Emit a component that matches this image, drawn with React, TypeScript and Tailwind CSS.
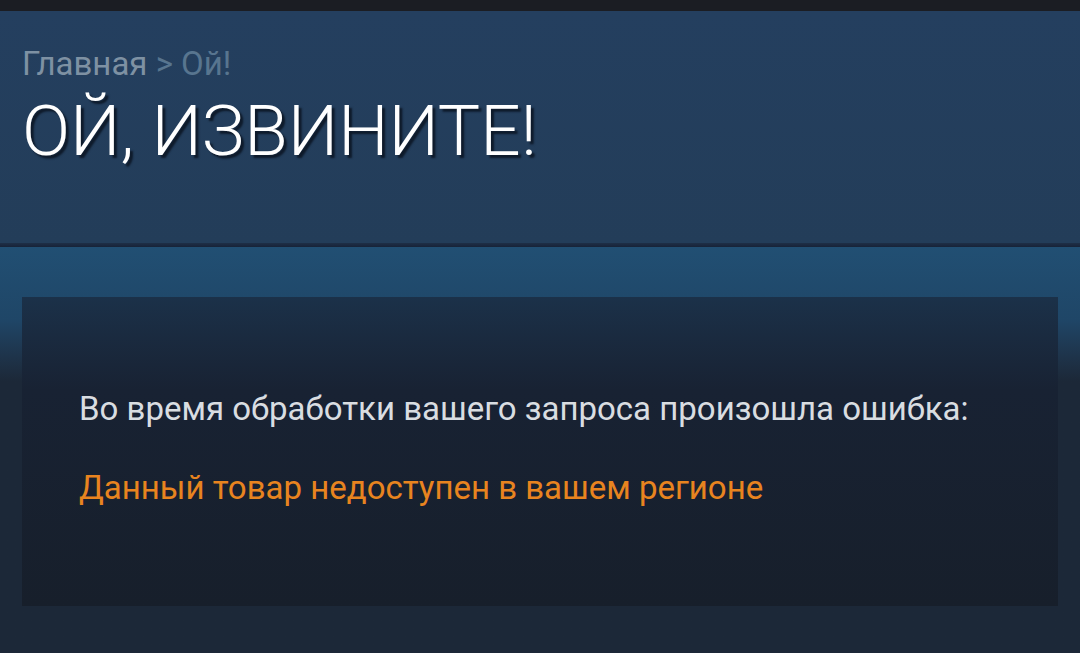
export default function App() {
  const font = { fontFamily: 'Roboto, "Noto Sans", sans-serif' };
  return (
    <div className="w-[1080px] h-[653px] overflow-hidden bg-[#1c2638]" style={font}>
      <div className="h-[11px] bg-[#1b1d23]" />

      {/* Header */}
      <div className="h-[232px] bg-gradient-to-b from-[#243f5f] to-[#233d59] px-[22px] pt-[31px]">
        <div className="text-[33px] leading-[44px] text-[#7e91a3]">
          Главная <span className="text-[#58758f]">&gt; Ой!</span>
        </div>
        <h1 className="mt-[5px] text-[71px] leading-[80px] font-light text-white [text-shadow:3px_3px_2px_#0e1a2a]">
          ОЙ, ИЗВИНИТЕ!
        </h1>
      </div>
      <div className="h-[4px] bg-gradient-to-b from-[#1e2f47] to-[#172338]" />

      {/* Content area */}
      <div className="bg-gradient-to-b from-[#214f73] from-0% via-[#1f4667] via-[18%] to-[#1c2838] to-[33%] px-[22px] pt-[50px] pb-[47px]">
        <div className="h-[309px] bg-gradient-to-b from-[#1b3149] via-[#182233] via-[30%] to-[#171f2b] pl-[57px] pt-[92px]">
          <p className="text-[33px] leading-[40px] text-[#d9dde1]">
            Во время обработки вашего запроса произошла ошибка:
          </p>
          <p className="mt-[39px] text-[33px] leading-[40px] text-[#e8841f]">
            Данный товар недоступен в вашем регионе
          </p>
        </div>
      </div>
    </div>
  );
}
